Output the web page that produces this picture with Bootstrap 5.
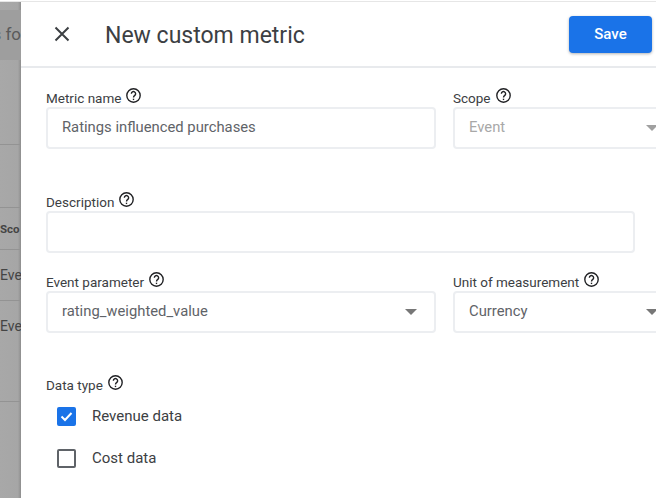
<!DOCTYPE html>
<html lang="en">
<head>
  <meta charset="UTF-8" />
  <meta name="viewport" content="width=device-width, initial-scale=1.0" />
  <title>New custom metric</title>
  <link href="https://cdn.jsdelivr.net/npm/bootstrap@5.3.1/dist/css/bootstrap.min.css" rel="stylesheet" />
  <style>
    html, body { height: 100%; overflow: hidden; }
    body { font-family: Roboto, "Liberation Sans", sans-serif; background: #fff; color: #3c4043; }
    .page-wrap { width: 656px; height: 497px; margin-top: 1px; border-top: 1px solid #e6e6e6; }
    .backdrop { width: 21px; flex: none; background: linear-gradient(90deg, #a8a8a8 0, #a6a6a6 85%, #8e8e8e 100%); color: #444; font-size: 14px; overflow: hidden; white-space: nowrap; }
    .back-title { height: 50px; margin-top: 8px; background: #9e9e9e; font-size: 17px; line-height: 48px; color: #5a5a5a; display: flex; justify-content: flex-end; }
    .back-cell { border-bottom: 1px solid #939393; display: flex; justify-content: flex-start; }
    .cell-a { height: 85px; }
    .cell-b { height: 63px; }
    .cell-c { height: 42px; line-height: 43px; font-size: 11.5px; font-weight: 700; }
    .cell-d { height: 51px; line-height: 50px; }
    .cell-e { height: 101px; line-height: 50px; }
    .sheet { flex: 1 1 auto; min-width: 0; overflow: hidden; }
    .sheet-head { height: 66px; border-bottom: 2px solid #e8eaed; padding: 0 4px 0 23px; }
    .close-icon { width: 36px; height: 36px; color: #3c4043; }
    .sheet-title { font-size: 23px; font-weight: 400; color: #3c4043; margin: 4px 0 0 25px; }
    .save-btn { width: 83px; height: 37px; margin-top: 1px; background: #1a73e8; border: 0; border-radius: 4px; color: #fff; font-size: 15px; font-weight: 500; box-shadow: 0 1px 3px rgba(60,64,67,.4); }
    .sheet-body { width: 660px; padding: 19px 0 0 25px; }
    .field-wide { width: 390px; flex: none; }
    .field-side { width: 224px; flex: none; margin-left: 17px; }
    .field-full { width: 589px; }
    .field-label { display: flex; align-items: center; gap: 4px; margin: 0; height: 20px; padding-top: 1px; font-size: 13.5px; line-height: 16px; color: #3c4043; }
    .help-icon { width: 17px; height: 17px; margin-top: -4px; color: #202124; }
    .text-box { height: 42px; border: 2px solid #eceef1; border-radius: 4px; padding: 0 17px 2px 14px; font-size: 14.8px; line-height: 36px; color: #5f6368; display: flex; align-items: center; justify-content: space-between; }
    .text-box.off { color: #a8a8a8; }
    .drop-arrow { width: 0; height: 0; margin-top: 2px; border-left: 6px solid transparent; border-right: 6px solid transparent; border-top: 6px solid #777; }
    .off .drop-arrow { border-top-color: #a0a0a0; }
    .check-row { height: 19px; margin-left: 11px; }
    .check-row.first { margin-top: 13px; }
    .check-row.second { margin-top: 23px; }
    .check-box { width: 19px; height: 19px; flex: none; border: 2px solid #5f6368; border-radius: 2px; }
    .check-box.on { background: #1a73e8; border-color: #1a73e8; }
    .check-label { font-size: 15px; line-height: 19px; color: #3c4043; margin-left: 16px; }
    .gap-a { margin-top: 42px; }
    .gap-b { margin-top: 18px; }
    .gap-c { margin-top: 41px; }
  </style>
</head>
<body>
<div class="page-wrap d-flex">
  <div class="backdrop">
    <div class="back-title">s fo</div>
    <div class="back-cell cell-a"></div>
    <div class="back-cell cell-b"></div>
    <div class="back-cell cell-c">Sco</div>
    <div class="back-cell cell-d">Eve</div>
    <div class="back-cell cell-e">Eve</div>
  </div>
  <div class="sheet">
    <div class="sheet-head d-flex align-items-center">
      <svg class="close-icon" viewBox="0 0 36 36" fill="none" stroke="currentColor" stroke-width="2"><path d="M11.500 11.500l13 13M24.500 11.500l-13 13"/></svg>
      <h1 class="sheet-title flex-grow-1">New custom metric</h1>
      <button type="button" class="save-btn">Save</button>
    </div>
    <div class="sheet-body">
      <div class="d-flex">
        <div class="field-wide">
          <label class="field-label">Metric name
            <svg class="help-icon" viewBox="0 0 16 16" fill="none" stroke="currentColor" stroke-width="1.300"><circle cx="8" cy="8" r="6.300"/><path d="M6 6.300a2 2 0 1 1 3.200 1.600c-.8.6-1.200 1-1.200 1.900"/><path d="M8 11v1.300"/></svg>
          </label>
          <div class="text-box">Ratings influenced purchases</div>
        </div>
        <div class="field-side">
          <label class="field-label">Scope
            <svg class="help-icon" viewBox="0 0 16 16" fill="none" stroke="currentColor" stroke-width="1.300"><circle cx="8" cy="8" r="6.300"/><path d="M6 6.300a2 2 0 1 1 3.200 1.600c-.8.6-1.200 1-1.200 1.900"/><path d="M8 11v1.300"/></svg>
          </label>
          <div class="text-box off">Event <span class="drop-arrow"></span></div>
        </div>
      </div>
      <div class="field-full gap-a">
        <label class="field-label">Description
          <svg class="help-icon" viewBox="0 0 16 16" fill="none" stroke="currentColor" stroke-width="1.300"><circle cx="8" cy="8" r="6.300"/><path d="M6 6.300a2 2 0 1 1 3.200 1.600c-.8.6-1.200 1-1.200 1.900"/><path d="M8 11v1.300"/></svg>
        </label>
        <div class="text-box"></div>
      </div>
      <div class="d-flex gap-b">
        <div class="field-wide">
          <label class="field-label">Event parameter
            <svg class="help-icon" viewBox="0 0 16 16" fill="none" stroke="currentColor" stroke-width="1.300"><circle cx="8" cy="8" r="6.300"/><path d="M6 6.300a2 2 0 1 1 3.200 1.600c-.8.6-1.200 1-1.200 1.900"/><path d="M8 11v1.300"/></svg>
          </label>
          <div class="text-box">rating_weighted_value <span class="drop-arrow"></span></div>
        </div>
        <div class="field-side">
          <label class="field-label">Unit of measurement
            <svg class="help-icon" viewBox="0 0 16 16" fill="none" stroke="currentColor" stroke-width="1.300"><circle cx="8" cy="8" r="6.300"/><path d="M6 6.300a2 2 0 1 1 3.200 1.600c-.8.6-1.200 1-1.200 1.900"/><path d="M8 11v1.300"/></svg>
          </label>
          <div class="text-box">Currency <span class="drop-arrow"></span></div>
        </div>
      </div>
      <div class="gap-c">
        <label class="field-label">Data type
          <svg class="help-icon" viewBox="0 0 16 16" fill="none" stroke="currentColor" stroke-width="1.300"><circle cx="8" cy="8" r="6.300"/><path d="M6 6.300a2 2 0 1 1 3.200 1.600c-.8.6-1.200 1-1.200 1.900"/><path d="M8 11v1.300"/></svg>
        </label>
        <div class="check-row first d-flex align-items-center">
          <span class="check-box on d-flex align-items-center justify-content-center">
            <svg width="15" height="15" viewBox="0 0 15 15" fill="none" stroke="#fff" stroke-width="2"><path d="M2.500 7.500l3.500 3.500 6.500-7"/></svg>
          </span>
          <span class="check-label">Revenue data</span>
        </div>
        <div class="check-row second d-flex align-items-center">
          <span class="check-box"></span>
          <span class="check-label">Cost data</span>
        </div>
      </div>
    </div>
  </div>
</div>
<script src="https://cdn.jsdelivr.net/npm/bootstrap@5.3.1/dist/js/bootstrap.bundle.min.js"></script>
</body>
</html>
